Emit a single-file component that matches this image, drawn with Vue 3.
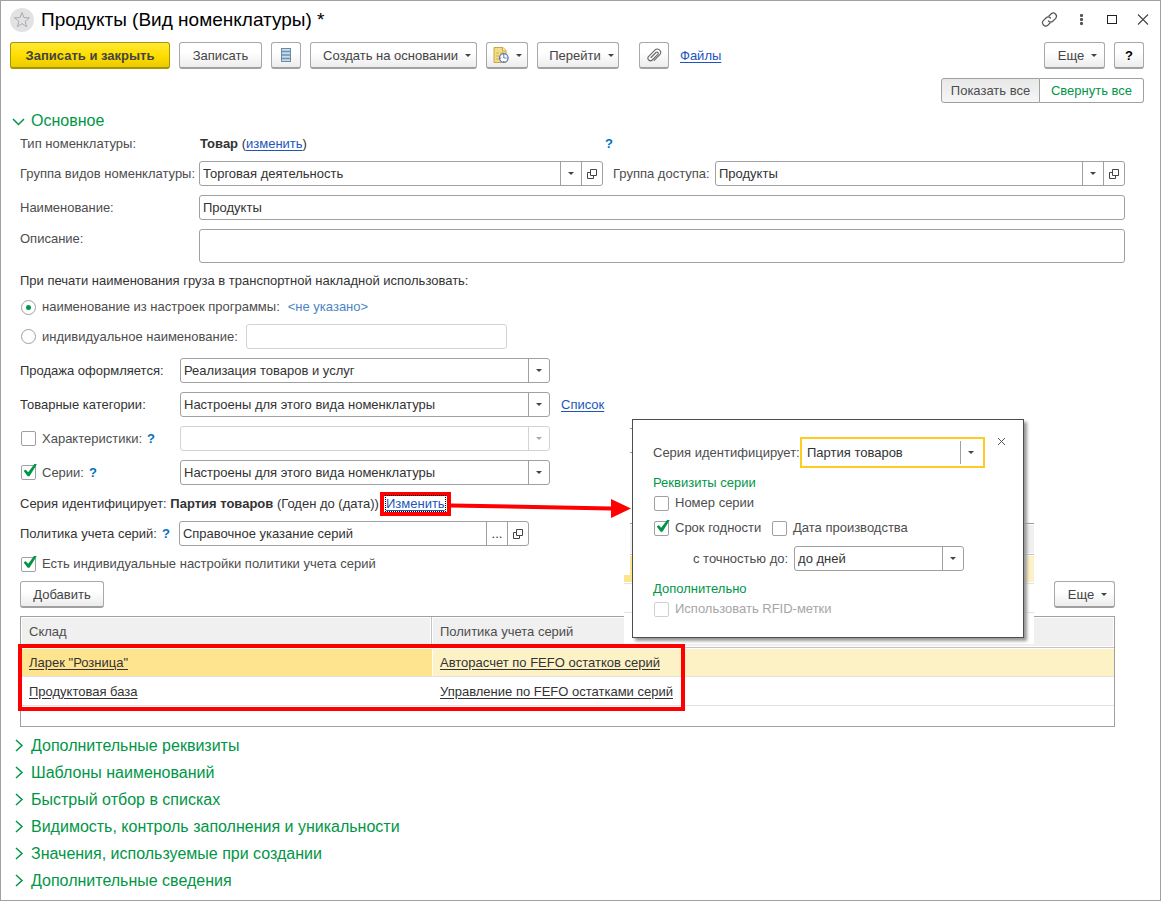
<script setup>
import { ref } from 'vue'

const sections = [
  'Дополнительные реквизиты',
  'Шаблоны наименований',
  'Быстрый отбор в списках',
  'Видимость, контроль заполнения и уникальности',
  'Значения, используемые при создании',
  'Дополнительные сведения',
]

const rows = [
  { store: 'Ларек "Розница"', policy: 'Авторасчет по FEFO остатков серий' },
  { store: 'Продуктовая база', policy: 'Управление по FEFO остатками серий' },
]

const title = ref('Продукты')
const description = ref('')
const customName = ref('')
const naming = ref('settings')
const policy = ref('Справочное указание серий')
const hasFeatures = ref(false)
const hasSeries = ref(true)
const hasOwnPolicy = ref(true)
const serialNumber = ref(false)
const expiry = ref(true)
const madeOn = ref(false)
</script>

<template>
  <main class="window">
    <header class="titlebar">
      <button class="star" type="button" aria-label="Избранное">
        <svg width="24" height="24" viewBox="0 0 24 24">
          <circle cx="12" cy="12" r="12" fill="#e2e2e2" />
          <path d="M12 4.500l1.900 5.100 5.600.2-4.400 3.500 1.500 5.400-4.600-3.100-4.600 3.100 1.500-5.400L4.500 9.800l5.600-.2z" fill="none" stroke="#a7abb3" stroke-width="1" />
        </svg>
      </button>
      <h1>Продукты (Вид номенклатуры) *</h1>
      <div class="win-tools">
        <button type="button" aria-label="Ссылка">
          <svg width="18" height="18" viewBox="0 0 18 18" fill="none" stroke="#555" stroke-width="1.200" stroke-linecap="round">
            <path d="M8 5l2.200-2.200a3.200 3.200 0 0 1 4.500 4.500L12 10a3.200 3.200 0 0 1-4.500 0" />
            <path d="M9 12l-2.200 2.200a3.200 3.200 0 0 1-4.500-4.500L5 7a3.200 3.200 0 0 1 4.500 0" />
          </svg>
        </button>
        <button type="button" aria-label="Меню">
          <svg width="18" height="18" viewBox="0 0 18 18" fill="#555">
            <rect x="8" y="3" width="3" height="3" rx="1" /><rect x="8" y="7" width="3" height="3" rx="1" /><rect x="8" y="11" width="3" height="3" rx="1" />
          </svg>
        </button>
        <button type="button" aria-label="Развернуть">
          <svg width="18" height="18" viewBox="0 0 18 18" fill="none" stroke="#222"><rect x="4.500" y="4.500" width="9" height="8" /></svg>
        </button>
        <button type="button" aria-label="Закрыть">
          <svg width="18" height="18" viewBox="0 0 18 18" stroke="#444" stroke-width="1.100"><path d="M4 3.500l10 10M14 3.500l-10 10" /></svg>
        </button>
      </div>
    </header>

    <div class="toolbar">
      <button class="btn primary" type="button">Записать и закрыть</button>
      <button class="btn save" type="button">Записать</button>
      <button class="btn icon" type="button" aria-label="Список">
        <svg width="12" height="16" viewBox="0 0 12 16">
          <rect x="1.500" y="1.500" width="9" height="13" fill="#c4dcec" stroke="#6b8ca3" />
          <path d="M2 4.500h8M2 8h8M2 11.500h8" stroke="#6f93ab" stroke-width="1.500" />
        </svg>
      </button>
      <button class="btn create" type="button">Создать на основании<i class="caret"></i></button>
      <button class="btn remind" type="button" aria-label="Напоминание">
        <svg width="16" height="16" viewBox="0 0 16 16">
          <path d="M1 .5h9l3 3v12H1z" fill="#f4dc86" stroke="#c9a545" />
          <path d="M9.500.5v3.500H13" fill="#fff3c0" stroke="#c9a545" />
          <path d="M3 6h3M7 6h4M3 9h3M3 12h3" stroke="#d0ad50" />
          <circle cx="10.800" cy="11" r="4.300" fill="#fff" stroke="#4c86bd" stroke-width="1.300" />
          <path d="M10.800 8v3h2" fill="none" stroke="#4c86bd" />
          <path d="M10.300 7.500h1M10.300 14.500h1M7.300 11h1M13.300 11h1" stroke="#d33" />
        </svg>
        <i class="caret"></i>
      </button>
      <button class="btn go" type="button">Перейти<i class="caret"></i></button>
      <button class="btn icon clip" type="button" aria-label="Вложения">
        <svg width="16" height="16" viewBox="0 0 16 16" fill="none" stroke="#666" stroke-width="1.100" stroke-linecap="round">
          <path d="M5 10.500l5-5a1.300 1.300 0 0 1 1.900 1.900l-5.600 5.600a2.500 2.500 0 0 1-3.600-3.600l6.200-6.200a3.300 3.300 0 0 1 4.700 4.700l-5.400 5.400" />
        </svg>
      </button>
      <a class="files" href="#">Файлы</a>
      <span class="spacer"></span>
      <button class="btn more" type="button">Еще<i class="caret"></i></button>
      <button class="btn icon help" type="button">?</button>
    </div>

    <div class="toggles">
      <button class="show-all" type="button">Показать все</button>
      <button class="hide-all" type="button">Свернуть все</button>
    </div>

    <button class="section open" type="button">
      <svg width="13" height="13" viewBox="0 0 13 13"><path d="M1 4l5.500 5.500L12 4" /></svg>Основное
    </button>

    <form class="form" @submit.prevent>
      <div class="pair type-row">
        <span class="muted">Тип номенклатуры:</span>
        <span><b>Товар</b> (<a href="#">изменить</a>)</span>
        <a class="hint" href="#">?</a>
      </div>

      <div class="pair group-row">
        <label class="muted" for="group">Группа видов номенклатуры:</label>
        <div class="combo with-open">
          <select id="group"><option>Торговая деятельность</option></select>
          <span class="cell arrow"><i class="caret"></i></span>
          <button class="cell" type="button" aria-label="Открыть"><svg width="10" height="10" viewBox="0 0 10 10"><path d="M3.500.5h6v6h-6zM3.500 3.500h-3v6h6v-3" /></svg></button>
        </div>
        <label class="muted second" for="access">Группа доступа:</label>
        <div class="combo with-open">
          <select id="access"><option>Продукты</option></select>
          <span class="cell arrow"><i class="caret"></i></span>
          <button class="cell" type="button" aria-label="Открыть"><svg width="10" height="10" viewBox="0 0 10 10"><path d="M3.500.5h6v6h-6zM3.500 3.500h-3v6h6v-3" /></svg></button>
        </div>
      </div>

      <div class="line name-row">
        <label class="muted wide" for="name">Наименование:</label>
        <input id="name" v-model="title" class="box grow" type="text">
      </div>
      <div class="line desc-row">
        <label class="muted wide" for="desc">Описание:</label>
        <textarea id="desc" v-model="description" class="box grow"></textarea>
      </div>

      <p class="line print-row">При печати наименования груза в транспортной накладной использовать:</p>
      <div class="line radio-row">
        <input id="by-settings" v-model="naming" type="radio" name="naming" value="settings">
        <label class="muted" for="by-settings">наименование из настроек программы:</label>
        <a class="unset" href="#">&lt;не указано&gt;</a>
      </div>
      <div class="line custom-row">
        <input id="by-custom" v-model="naming" type="radio" name="naming" value="custom">
        <label class="muted" for="by-custom">индивидуальное наименование:</label>
        <input v-model="customName" class="box custom-name" type="text" aria-label="Индивидуальное наименование" disabled>
      </div>

      <div class="line field">
        <label class="name" for="sale">Продажа оформляется:</label>
        <div class="combo">
          <select id="sale"><option>Реализация товаров и услуг</option></select>
          <span class="cell arrow"><i class="caret"></i></span>
        </div>
      </div>
      <div class="line field">
        <label class="name" for="categories">Товарные категории:</label>
        <div class="combo">
          <select id="categories"><option>Настроены для этого вида номенклатуры</option></select>
          <span class="cell arrow"><i class="caret"></i></span>
        </div>
        <a class="list-link" href="#">Список</a>
      </div>
      <div class="line field">
        <div class="name">
          <input id="features" v-model="hasFeatures" type="checkbox">
          <label class="muted" for="features">Характеристики:</label>
          <a class="hint" href="#">?</a>
        </div>
        <div class="combo off">
          <select aria-label="Характеристики" disabled><option></option></select>
          <span class="cell arrow"><i class="caret"></i></span>
        </div>
      </div>
      <div class="line field">
        <div class="name">
          <input id="series" v-model="hasSeries" type="checkbox">
          <label class="muted" for="series">Серии:</label>
          <a class="hint" href="#">?</a>
        </div>
        <div class="combo">
          <select aria-label="Серии"><option>Настроены для этого вида номенклатуры</option></select>
          <span class="cell arrow"><i class="caret"></i></span>
        </div>
      </div>

      <div class="line ident-row">
        <span class="ident">Серия идентифицирует: <b>Партия товаров</b> (Годен до (дата))</span>
        <span class="marked">
          <a href="#">Изменить</a>
          <svg class="pointer" width="181" height="26" viewBox="0 0 181 26" fill="#f00">
            <path d="M0 11.500L160 14.500V7L180 16.500 160 26V18.500L0 15.500z" />
          </svg>
        </span>
      </div>

      <div class="line policy-row">
        <label for="policy">Политика учета серий:</label>
        <a class="hint" href="#">?</a>
        <div class="combo with-open">
          <input id="policy" v-model="policy" type="text">
          <button class="cell" type="button">...</button>
          <button class="cell" type="button" aria-label="Открыть"><svg width="10" height="10" viewBox="0 0 10 10"><path d="M3.500.5h6v6h-6zM3.500 3.500h-3v6h6v-3" /></svg></button>
        </div>
      </div>
      <div class="line own-row">
        <input id="own" v-model="hasOwnPolicy" type="checkbox">
        <label class="muted" for="own">Есть индивидуальные настройки политики учета серий</label>
      </div>

      <div class="line add-row">
        <button class="btn add" type="button">Добавить</button>
        <span class="spacer"></span>
        <button class="btn more" type="button">Еще<i class="caret"></i></button>
      </div>

      <div class="grid-box">
        <table>
          <thead>
            <tr><th>Склад</th><th>Политика учета серий</th></tr>
          </thead>
          <tbody>
            <tr v-for="(row, i) in rows" :key="row.store" :class="{ current: i === 0 }">
              <td><a href="#">{{ row.store }}</a></td>
              <td><a href="#">{{ row.policy }}</a></td>
            </tr>
          </tbody>
        </table>
        <div class="frame"></div>
      </div>
    </form>

    <nav class="sections">
      <button v-for="name in sections" :key="name" class="section" type="button">
        <svg width="13" height="13" viewBox="0 0 13 13"><path d="M4 1l6 5.500L4 12" /></svg>{{ name }}
      </button>
    </nav>

    <div class="overlay">
      <svg class="under" width="410" height="225" viewBox="0 0 410 225">
        <path d="M0 0h410v225H0z" fill="#fff" />
        <path d="M6 9.500h4M6 33.500h4M6 104.500h404" stroke="#999" />
        <path d="M6 106h404v28H6z" fill="#f0f0f0" />
        <path d="M6 135.500h404" stroke="#c4c4c4" />
        <path d="M6 137h100v26H0v-7h6z" fill="#ffe48f" />
        <path d="M106 137h304v26H106z" fill="#fdf2c6" />
        <path d="M0 164.500h410M0 193.500h410" stroke="#e2e2e2" />
      </svg>
      <section class="popup" aria-label="Настройка серии">
        <button class="close" type="button" aria-label="Закрыть">
          <svg width="9" height="9" viewBox="0 0 9 9" stroke="#555"><path d="M1 1l7 7M8 1L1 8" /></svg>
        </button>
        <div class="line first">
          <label class="muted" for="kind">Серия идентифицирует:</label>
          <div class="combo active">
            <select id="kind"><option>Партия товаров</option></select>
            <span class="cell arrow"><i class="caret"></i></span>
          </div>
        </div>
        <h2 class="props">Реквизиты серии</h2>
        <div class="line">
          <input id="serial" v-model="serialNumber" type="checkbox">
          <label class="muted" for="serial">Номер серии</label>
        </div>
        <div class="line expiry-row">
          <input id="expiry" v-model="expiry" type="checkbox">
          <label class="muted expiry" for="expiry">Срок годности</label>
          <input id="made" v-model="madeOn" type="checkbox">
          <label class="muted" for="made">Дата производства</label>
        </div>
        <div class="line precision">
          <label class="muted" for="precision">с точностью до:</label>
          <div class="combo">
            <select id="precision"><option>до дней</option></select>
            <span class="cell arrow"><i class="caret"></i></span>
          </div>
        </div>
        <h2 class="extra">Дополнительно</h2>
        <div class="line">
          <input id="rfid" type="checkbox" disabled>
          <label class="faded" for="rfid">Использовать RFID-метки</label>
        </div>
      </section>
    </div>
  </main>
</template>

<style>
body {
  margin: 0;
  background: #fff;
}
</style>

<style scoped>
* {
  box-sizing: border-box;
}
.window {
  position: relative;
  min-height: 100vh;
  border: 1px solid #a0a0a0;
  color: #333;
  font: 13px/20px "Liberation Sans", Arial, sans-serif;
}
button,
input,
select,
textarea {
  margin: 0;
  padding: 0;
  border: 0;
  background: none;
  color: inherit;
  font: inherit;
}
svg {
  display: block;
  flex: none;
}
p,
h1,
h2 {
  margin: 0;
  font-weight: normal;
}
a {
  color: #1d55bb;
  text-underline-offset: 2px;
}
.spacer {
  flex: 1;
}
.muted {
  color: #4d4d4d;
}
.faded {
  color: #a6a6a6;
}
.hint {
  color: #0070bf;
  font-weight: bold;
  text-decoration: none;
}

.titlebar {
  display: flex;
  align-items: center;
  height: 37px;
  padding: 0 8px 0 9px;
}
.titlebar h1 {
  margin-left: 7px;
  color: #000;
  font-size: 19px;
}
.win-tools {
  display: flex;
  gap: 13px;
  margin-left: auto;
}

.toolbar {
  display: flex;
  align-items: center;
  gap: 9px;
  margin-top: 4px;
  padding: 0 16px 0 9px;
}
.btn {
  display: flex;
  align-items: center;
  justify-content: center;
  height: 27px;
  padding: 1px 13px 0;
  border: 1px solid #a9a9a9;
  border-bottom: 2px solid #a0a0a0;
  border-radius: 3px;
  background: linear-gradient(#fff 40%, #ececec);
  color: #444;
  white-space: nowrap;
}
.btn .caret {
  margin-left: 7px;
}
.primary {
  width: 160px;
  border-color: #a89600;
  background: linear-gradient(#ffe838, #ffdf00 50%, #ecca00);
  font-weight: bold;
}
.save {
  width: 83px;
}
.icon {
  width: 30px;
  padding: 0;
}
.create {
  width: 167px;
}
.remind {
  width: 42px;
  padding: 0;
}
.go {
  width: 82px;
}
.more {
  width: 61px;
  padding: 1px 7px 0 13px;
}
.add {
  width: 84px;
}
.create,
.go {
  padding: 1px 6px 0 13px;
}
.clip {
  margin-left: 11px;
}
.files {
  margin-left: 2px;
}
.help {
  padding-top: 1px;
  color: #000;
  font-weight: bold;
}
.caret {
  width: 0;
  border: 3px solid transparent;
  border-top-color: #444;
  border-bottom: 0;
}

.toggles {
  display: flex;
  justify-content: flex-end;
  margin: 9px 16px 0 0;
}
.toggles button {
  height: 25px;
  border: 1px solid #a0a0a0;
}
.toggles .show-all {
  width: 99px;
  border-radius: 3px 0 0 3px;
  background: linear-gradient(#e8e8e8, #f6f6f6);
  color: #4d4d4d;
}
.toggles .hide-all {
  width: 104px;
  border-left: 0;
  border-radius: 0 3px 3px 0;
  background: #fff;
  color: #009646;
}

.section {
  display: flex;
  align-items: center;
  gap: 6px;
  height: 27px;
  padding-left: 11px;
  color: #009646;
  font-size: 16px;
}
.section path {
  fill: none;
  stroke: #009646;
  stroke-width: 1.500;
}
.section.open {
  height: 22px;
  margin-top: 7px;
}
.sections {
  margin-top: 5px;
}

.form {
  padding: 0 35px 0 19px;
}
.pair {
  display: grid;
  grid-template-columns: 179px minmax(0, 404fr) 112px minmax(0, 410fr);
  align-items: center;
  white-space: nowrap;
}
.type-row {
  margin-top: 2px;
}
.type-row b {
  margin-left: 1px;
}
.type-row .hint {
  margin-left: 2px;
}
.group-row {
  margin-top: 7px;
}
.second {
  padding-left: 10px;
}
.line {
  display: flex;
  align-items: center;
  min-height: 20px;
  white-space: nowrap;
}
.wide {
  width: 179px;
}
.grow {
  flex: 1;
}
.box {
  height: 25px;
  padding: 0 3px;
  border: 1px solid #a0a0a0;
  border-radius: 3px;
}
.box:disabled {
  border-color: #d3d3d3;
}
textarea.box {
  height: 34px;
  resize: none;
}
.name-row,
.desc-row,
.field,
.ident-row {
  margin-top: 9px;
}
.desc-row {
  align-items: flex-start;
}
.print-row {
  margin-top: 8px;
}
.radio-row {
  margin-top: 6px;
}
.custom-row {
  margin-top: 7px;
}
.unset {
  margin-left: 8px;
  color: #4a86c5;
  text-decoration: none;
}
.custom-name {
  width: 261px;
  margin-left: 8px;
}

input[type="radio"],
input[type="checkbox"] {
  display: grid;
  flex: none;
  place-items: center;
  width: 15px;
  height: 15px;
  margin: 0 6px 0 1px;
  border: 1px solid #a0a0a0;
  border-radius: 2px;
  appearance: none;
}
input[type="radio"] {
  border-radius: 50%;
}
input[type="radio"]:checked::before {
  width: 5px;
  height: 5px;
  border-radius: 50%;
  background: #009646;
  content: "";
}
input[type="checkbox"]:checked::before {
  width: 13px;
  height: 13px;
  margin: -4px -3px 0 0;
  background: #009646;
  clip-path: polygon(0 52%, 18% 44%, 36% 64%, 84% 0, 100% 0, 100% 8%, 46% 94%, 32% 94%);
  content: "";
}
input[type="checkbox"]:disabled {
  border-color: #d0d0d0;
}

.combo {
  display: grid;
  grid-template-columns: minmax(0, 1fr) 21px;
  height: 25px;
  border: 1px solid #a0a0a0;
  border-radius: 3px;
  background: #fff;
}
.combo.with-open {
  grid-template-columns: minmax(0, 1fr) 21px 21px;
}
.combo > select {
  grid-area: 1 / 1 / 2 / 3;
  min-width: 0;
  padding: 0 24px 0 3px;
  appearance: none;
}
.combo > input {
  min-width: 0;
  padding: 0 3px;
}
.cell {
  display: grid;
  place-items: center;
  border-left: 1px solid #a0a0a0;
}
.arrow {
  grid-area: 1 / 2;
  pointer-events: none;
}
.cell svg {
  fill: none;
  stroke: #444;
}
.combo.off,
.off .cell {
  border-color: #d3d3d3;
}
.off .caret {
  border-top-color: #aaa;
}
.field .combo {
  width: 370px;
}
.name {
  display: flex;
  align-items: center;
  width: 160px;
}
.name .hint,
.policy-row .hint {
  margin-left: 5px;
}
.list-link {
  margin-left: 11px;
}

.ident {
  width: 358px;
}
.marked {
  position: relative;
  height: 24px;
  margin: -2px 0 -2px 2px;
  padding: 0 6px;
  box-shadow: inset 0 0 0 4px #f00;
  line-height: 24px;
}
.marked a {
  outline: 1px dotted #000;
}
.pointer {
  position: absolute;
  top: 0;
  left: 100%;
  z-index: 3;
}
.policy-row {
  margin-top: 7px;
}
.policy-row .combo {
  width: 350px;
  margin-left: 9px;
}
.own-row {
  margin-top: 8px;
}
.add-row {
  margin: 7px 10px 0 0;
}

.grid-box {
  position: relative;
  height: 111px;
  margin: 8px 10px 0 0;
  border: 1px solid #a0a0a0;
}
table {
  width: 100%;
  border-spacing: 0;
  table-layout: fixed;
}
th,
td {
  height: 29px;
  padding: 2px 8px 0;
  border-bottom: 1px solid #e2e2e2;
  text-align: left;
  font-weight: normal;
}
th {
  height: 31px;
  padding-top: 0;
  border-bottom-color: #c4c4c4;
  background: #f0f0f0;
  box-shadow: inset 0 0 0 1px #fff;
  color: #4d4d4d;
}
th:first-child {
  width: 411px;
  border-right: 1px solid #c4c4c4;
}
td a {
  color: #333;
}
.current td {
  background: #fdf2c6;
  box-shadow: inset 1px 1px #fff;
}
.current td:first-child {
  background: #ffe48f;
}
.frame {
  position: absolute;
  top: 27px;
  left: -3px;
  width: 667px;
  height: 67px;
  border: 4px solid #f00;
  pointer-events: none;
}

.overlay {
  position: absolute;
  top: 418px;
  left: 623px;
  width: 410px;
}
.under {
  position: absolute;
}
.popup {
  position: relative;
  width: 392px;
  margin-left: 8px;
  padding: 17px 20px 18px;
  border: 1px solid #4d4d4d;
  background: #fff;
  box-shadow: 3px 3px 3px #999;
}
.popup h2 {
  color: #009646;
  font-size: 13px;
}
.close {
  position: absolute;
  top: 17px;
  right: 17px;
}
.first label {
  width: 147px;
}
.first .combo {
  width: 185px;
  height: 31px;
}
.combo.active {
  padding: 2px;
  border: 2px solid #fc2;
  border-radius: 0;
}
.props,
.expiry-row {
  margin-top: 5px;
}
.expiry {
  width: 96px;
}
.precision {
  margin-top: 8px;
  padding-left: 40px;
}
.precision .combo {
  width: 170px;
  margin-left: 6px;
}
.extra {
  margin-top: 8px;
}
</style>
